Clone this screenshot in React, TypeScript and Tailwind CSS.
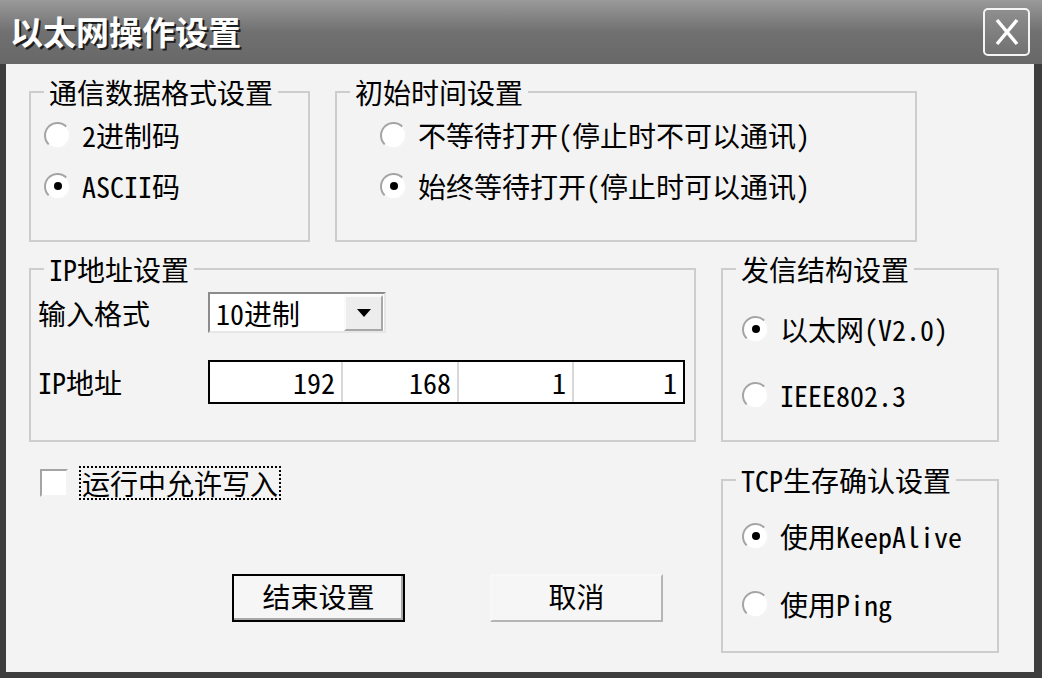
import React from "react";

const font = { fontFamily: "'Noto Sans Mono CJK SC', 'Noto Sans CJK SC', monospace" };

function Radio({ checked, label }: { checked?: boolean; label: string }) {
  return (
    <div className="flex h-[26px] items-center">
      <span className="relative flex h-[27px] w-[27px] items-center justify-center rounded-full border-2 border-[#a4a4a4] border-r-[#f4f4f4] border-b-[#f4f4f4] bg-white">
        {checked && <span className="h-[8px] w-[8px] rounded-full bg-black" />}
      </span>
      <span className="ml-[11px] text-[28px] leading-none text-black">{label}</span>
    </div>
  );
}

function Group({
  title,
  className,
  children,
}: {
  title: string;
  className: string;
  children: React.ReactNode;
}) {
  return (
    <fieldset className={`border-2 border-[#cdcdcd] ${className}`}>
      <legend className="ml-[13px] px-[5px] text-[28px] leading-[30px] text-black">{title}</legend>
      {children}
    </fieldset>
  );
}

function Button({ label, primary }: { label: string; primary?: boolean }) {
  return (
    <button
      className={`flex h-[48px] w-[173px] items-center justify-center pb-[4px] text-[28px] text-black ${
        primary
          ? "border-2 border-black bg-[#f6f6f6] shadow-[inset_-2px_-2px_0_#a8a8a8]"
          : "border-2 border-[#f8f8f8] border-r-[#b4b4b4] border-b-[#b4b4b4] bg-[#f6f6f6]"
      }`}
    >
      {label}
    </button>
  );
}

export default function App() {
  return (
    <div style={font} className="flex h-[678px] w-[1042px] flex-col overflow-hidden bg-[#3d3d3d]">
      {/* title bar */}
      <div className="flex h-[64px] items-center bg-gradient-to-b from-[#9a9a9a] via-[#707070] to-[#686868] pl-[10px] pr-[12px]">
        <span className="text-[33px] font-bold text-white [text-shadow:2px_2px_0_#1e1e1e]">
          以太网操作设置
        </span>
        <div className="ml-auto flex h-[48px] w-[47px] items-center justify-center rounded-[5px] border-2 border-[#f4f4f4] bg-gradient-to-b from-[#8e8e8e] to-[#727272]">
          <svg width="26" height="28" viewBox="0 0 26 28">
            <path d="M3 2 L23 26 M23 2 L3 26" stroke="#ffffff" strokeWidth="3.5" fill="none" />
          </svg>
        </div>
      </div>

      {/* client area */}
      <div className="ml-[6px] mr-[8px] mb-[6px] flex-1 bg-[#f3f3f3] pl-[23px] pt-[13px]">
        <div className="flex gap-[25px]">
          <Group title="通信数据格式设置" className="h-[165px] w-[281px]">
            <div className="flex flex-col gap-[25px] pl-[13px] pt-[15px]">
              <Radio label="2进制码" />
              <Radio label="ASCII码" checked />
            </div>
          </Group>
          <Group title="初始时间设置" className="h-[165px] w-[582px]">
            <div className="flex flex-col gap-[25px] pl-[43px] pt-[15px]">
              <Radio label="不等待打开(停止时不可以通讯)" />
              <Radio label="始终等待打开(停止时可以通讯)" checked />
            </div>
          </Group>
        </div>

        <div className="mt-[12px] flex">
          <div className="flex w-[667px] flex-col">
            <Group title="IP地址设置" className="h-[188px] w-[667px]">
              <div className="flex flex-col pl-[7px] pt-[8px]">
                <div className="flex h-[41px] items-center">
                  <span className="w-[170px] text-[28px] leading-none">输入格式</span>
                  <div className="flex h-[41px] w-[178px] items-center border-2 border-[#8c8c8c] border-r-[#e6e6e6] border-b-[#e6e6e6] bg-white pl-[6px] pr-[1px]">
                    <span className="text-[28px] leading-none">10进制</span>
                    <span className="ml-auto flex h-[36px] w-[39px] items-center justify-center border-2 border-[#fafafa] border-r-[#a8a8a8] border-b-[#a8a8a8] bg-[#ededed]">
                      <svg width="14" height="8" viewBox="0 0 14 8">
                        <path d="M0 0 H14 L7 8 Z" fill="#000" />
                      </svg>
                    </span>
                  </div>
                </div>
                <div className="mt-[27px] flex h-[44px] items-center">
                  <span className="w-[170px] text-[28px] leading-none">IP地址</span>
                  <div className="flex h-[44px] w-[477px] border-2 border-black bg-white text-[28px] leading-none">
                    {[
                      ["192", "w-[133px]"],
                      ["168", "w-[116px]"],
                      ["1", "w-[115px]"],
                      ["1", "flex-1"],
                    ].map(([v, w], i) => (
                      <div
                        key={i}
                        className={`flex items-center justify-end pr-[6px] ${w} ${
                          i < 3 ? "border-r-2 border-[#d8d8d8]" : ""
                        }`}
                      >
                        {v}
                      </div>
                    ))}
                  </div>
                </div>
              </div>
            </Group>

            <div className="mt-[24px] flex h-[34px] items-center pl-[11px]">
              <span className="h-[28px] w-[28px] border-2 border-[#a4a4a4] border-r-[#f4f4f4] border-b-[#f4f4f4] bg-white" />
              <span className="ml-[11px] border-2 border-dotted border-black px-[1px] text-[28px] leading-[30px]">
                运行中允许写入
              </span>
            </div>

            <div className="mt-[74px] flex gap-[85px] pl-[203px]">
              <Button label="结束设置" primary />
              <Button label="取消" />
            </div>
          </div>

          <div className="ml-[25px] flex w-[278px] flex-col">
            <Group title="发信结构设置" className="h-[188px] w-[278px]">
              <div className="flex flex-col gap-[40px] pl-[19px] pt-[32px]">
                <Radio label="以太网(V2.0)" checked />
                <Radio label="IEEE802.3" />
              </div>
            </Group>
            <Group title="TCP生存确认设置" className="mt-[23px] h-[188px] w-[278px]">
              <div className="flex flex-col gap-[42px] pl-[19px] pt-[28px]">
                <Radio label="使用KeepAlive" checked />
                <Radio label="使用Ping" />
              </div>
            </Group>
          </div>
        </div>
      </div>
    </div>
  );
}
